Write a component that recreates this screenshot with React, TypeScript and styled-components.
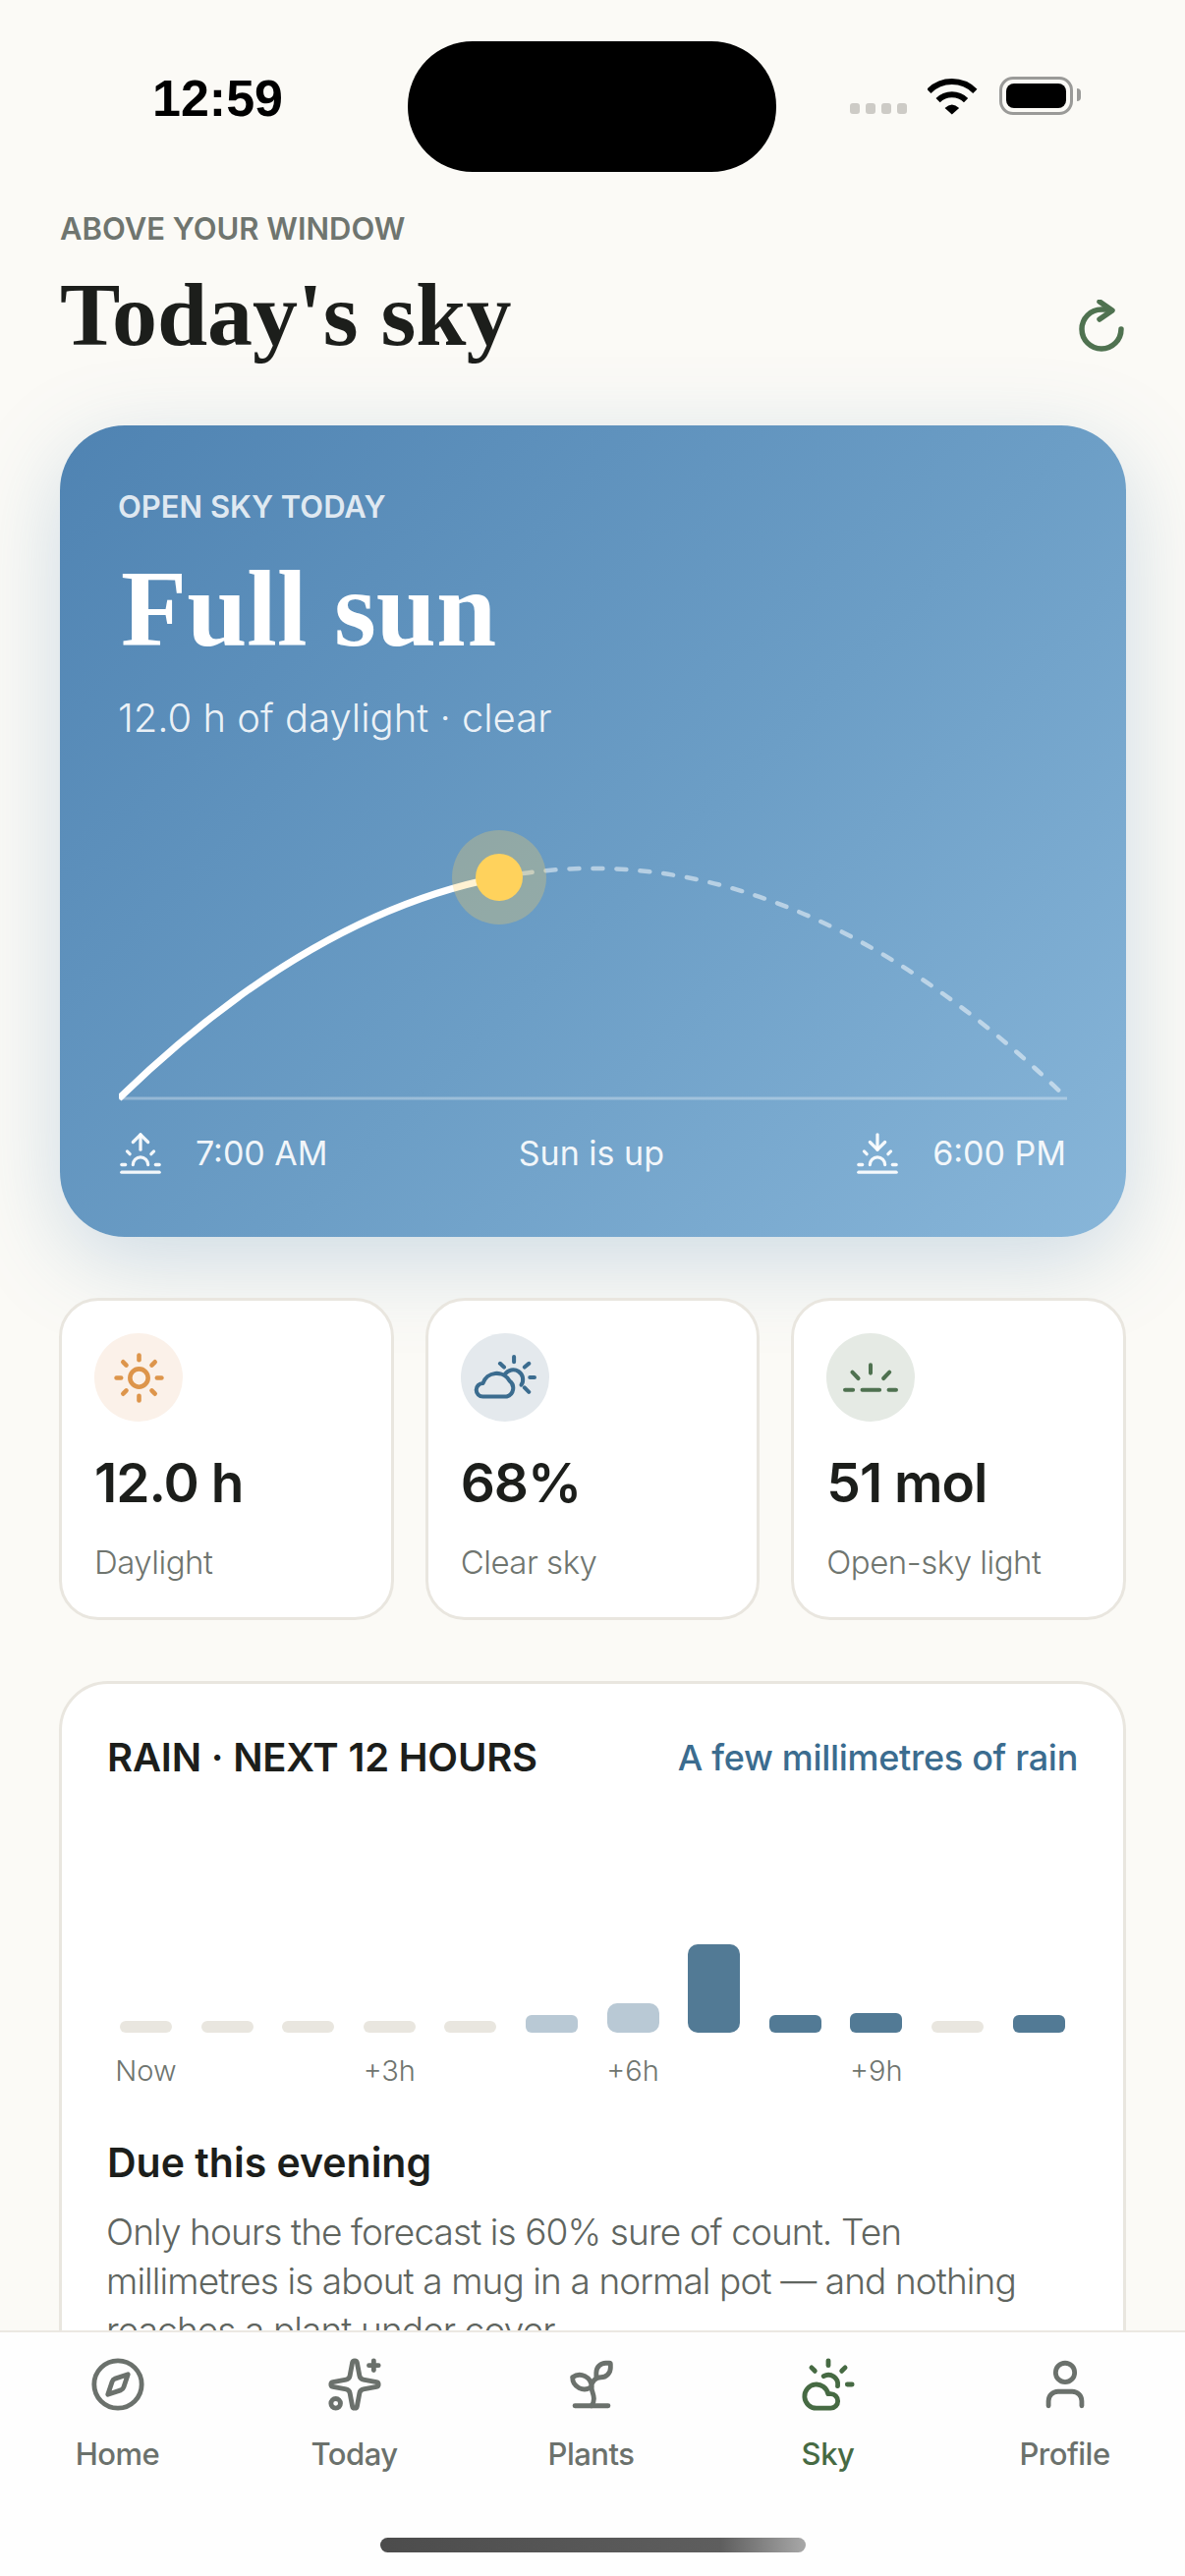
import React from 'react'
import styled, { createGlobalStyle } from 'styled-components'
import { Compass, Sparkles, Sprout, CloudSun, User, Sun, Sunrise, Sunset } from 'lucide-react'

const GlobalStyle = createGlobalStyle`
  html, body { margin: 0; padding: 0; background: #fbfaf6; }
  * { box-sizing: border-box; }
`

const sans = `Inter, "Noto Sans", sans-serif`
const serif = `"Liberation Serif", serif`

const Screen = styled.div`
  width: 1206px;
  height: 2622px;
  display: flex;
  flex-direction: column;
  overflow: hidden;
  background: #fbfaf6;
  font-family: ${sans};
  color: #1c1e1b;
`

const Content = styled.main`
  flex: 1;
  min-height: 0;
  overflow: hidden;
`

const StatusBar = styled.div`
  height: 175px;
  padding: 42px 114px 0 155px;
  display: grid;
  grid-template-columns: 260px 375px 1fr;
`

const Clock = styled.div`
  margin-top: 28px;
  font: 700 52px/60px "Liberation Sans", sans-serif;
  color: #000;
`

const Island = styled.div`
  height: 133px;
  border-radius: 66px;
  background: #000;
`

const StatusIcons = styled.div`
  display: flex;
  justify-content: flex-end;
  align-items: flex-end;
  height: 75px;
  gap: 21px;
`

const SignalDots = styled.div`
  display: flex;
  gap: 6px;
  margin-bottom: 1px;
`

const SignalDot = styled.span`
  width: 10px;
  height: 11px;
  border-radius: 3px;
  background: #cdcbc6;
`

const Battery = styled.div`
  position: relative;
  width: 75px;
  height: 39px;
  margin-left: 1px;
  padding: 4px;
  border: 3px solid #9a9a98;
  border-radius: 14px;
  &::after {
    content: '';
    position: absolute;
    right: -11px;
    top: 9px;
    width: 4px;
    height: 13px;
    border-radius: 0 4px 4px 0;
    background: #9a9a98;
  }
`

const BatteryFill = styled.div`
  width: 100%;
  height: 100%;
  border-radius: 8px;
  background: #000;
`

const Header = styled.header`
  padding: 38px 61px 0;
  height: 258px;
  display: flex;
  justify-content: space-between;
`

const Eyebrow = styled.div`
  font-size: 31px;
  line-height: 40px;
  font-weight: 600;
  color: #6f756f;
`

const PageTitle = styled.h1`
  margin: 15px 0 0;
  font: 700 92px/104px ${serif};
  color: #1c1e1b;
`

const RefreshButton = styled.div`
  margin: 92px 0 0;
  width: 48px;
  height: 56px;
  color: #4f7250;
`

const Hero = styled.section`
  margin: 0 60px 0 61px;
  height: 826px;
  padding: 63px 61px 0 59px;
  border-radius: 66px;
  color: #fff;
  background: linear-gradient(135deg, #4f83b2 0%, #6c9ec6 55%, #88b6d9 100%);
  box-shadow: 0 24px 90px rgba(79, 131, 178, 0.26);
`

const HeroLabel = styled.div`
  font-size: 31px;
  line-height: 40px;
  font-weight: 600;
  color: rgba(255, 255, 255, 0.82);
`

const HeroTitle = styled.h2`
  margin: 24px 0 0 3px;
  font: 700 110px/120px ${serif};
  color: #fff;
`

const HeroSub = styled.div`
  margin-top: 26px;
  font-size: 40px;
  line-height: 50px;
  font-weight: 300;
  color: rgba(255, 255, 255, 0.9);
`

const ArcChart = styled.svg`
  display: block;
  width: 965px;
  height: 292px;
  margin: 74px 0 0 1px;
`

const SunTimes = styled.div`
  margin-top: 27px;
  display: flex;
  justify-content: space-between;
  align-items: center;
  font-size: 34px;
  line-height: 50px;
  font-weight: 400;
  color: rgba(255, 255, 255, 0.92);
`

const SunTime = styled.div`
  display: flex;
  align-items: center;
  gap: 33px;
`

const Metrics = styled.div`
  margin: 62px 60px 0;
  display: grid;
  grid-template-columns: repeat(3, 1fr);
  gap: 32px;
`

const MetricCard = styled.div`
  height: 328px;
  padding: 33px;
  border: 3px solid #e9e6df;
  border-radius: 40px;
  background: #fff;
`

const MetricIcon = styled.div<{ $bg: string; $fg: string }>`
  width: 90px;
  height: 90px;
  border-radius: 50%;
  display: flex;
  align-items: center;
  justify-content: center;
  background: ${({ $bg }) => $bg};
  color: ${({ $fg }) => $fg};
`

const MetricValue = styled.div`
  margin-top: 29px;
  font-size: 55px;
  line-height: 66px;
  font-weight: 600;
  letter-spacing: -1px;
`

const MetricLabel = styled.div`
  margin-top: 26px;
  font-size: 33px;
  line-height: 44px;
  font-weight: 300;
  letter-spacing: -0.5px;
  color: #6f756f;
`

const RainCard = styled.section`
  margin: 62px 60px 0;
  height: 900px;
  padding: 49px 46px 0;
  border: 3px solid #e9e6df;
  border-radius: 50px;
  background: #fff;
`

const RainHead = styled.div`
  display: flex;
  justify-content: space-between;
  align-items: center;
`

const RainTitle = styled.div`
  font-size: 40px;
  line-height: 52px;
  font-weight: 600;
  letter-spacing: -0.2px;
`

const RainSummary = styled.div`
  font-size: 36px;
  line-height: 52px;
  font-weight: 500;
  letter-spacing: -0.3px;
  color: #3b6c8f;
`

const Bars = styled.div`
  margin: 0 0 0 13px;
  height: 254px;
  display: grid;
  grid-template-columns: repeat(12, 53px);
  column-gap: 29.6px;
  align-items: end;
`

const Bar = styled.div<{ $tone: 'none' | 'light' | 'heavy'; $h: number }>`
  height: ${({ $h }) => $h}px;
  border-radius: ${({ $h }) => ($h > 20 ? 10 : 6)}px;
  background: ${({ $tone }) =>
    $tone === 'none' ? '#e9e6df' : $tone === 'light' ? '#b9c9d5' : '#527a95'};
`

const BarLabels = styled.div`
  margin: 20px 0 0 13px;
  display: grid;
  grid-template-columns: repeat(12, 53px);
  column-gap: 29.6px;
`

const BarLabel = styled.div`
  font-size: 29px;
  line-height: 38px;
  font-weight: 300;
  white-space: nowrap;
  display: flex;
  justify-content: center;
  color: #6f756f;
`

const DueTitle = styled.h3`
  margin: 48px 0 0;
  font-size: 41px;
  line-height: 52px;
  font-weight: 600;
`

const DueBody = styled.p`
  margin: 20px 0 0 -1px;
  font-size: 37px;
  line-height: 50px;
  font-weight: 300;
  letter-spacing: -0.9px;
  color: #5f655f;
`

const TabBar = styled.nav`
  height: 250px;
  flex: none;
  border-top: 2px solid #ebe8e2;
  background: #fefefe;
  padding-top: 24px;
  display: flex;
  flex-direction: column;
`

const Tabs = styled.div`
  display: grid;
  grid-template-columns: repeat(5, 241px);
  margin-left: -1px;
`

const Tab = styled.div<{ $active?: boolean }>`
  display: flex;
  flex-direction: column;
  align-items: center;
  gap: 22px;
  font-size: 31px;
  line-height: 40px;
  font-weight: 500;
  letter-spacing: -0.5px;
  color: ${({ $active }) => ($active ? '#466a43' : '#6b716c')};
`

const HomeIndicator = styled.div`
  width: 433px;
  height: 15px;
  margin: 65px auto 0;
  border-radius: 8px;
  background: linear-gradient(90deg, #4c4c4c 0%, #5e5e5e 80%, #a8a8a8 100%);
`

const Refresh = () => (
  <svg width="48" height="56" viewBox="0 0 48 56" fill="none" stroke="currentColor" strokeWidth="5.5" strokeLinecap="round" strokeLinejoin="round">
    <path d="M44 30a20 20 0 1 1-20-20h8" />
    <path d="M22 2l13 9-13 9" />
  </svg>
)

const Wifi = () => (
  <svg width="51" height="38" viewBox="285 55 154 113">
    <path d="M289 96A100 100 0 0 1 431 96" fill="none" stroke="#000" strokeWidth="18" />
    <path d="M317 124A61 61 0 0 1 403 124" fill="none" stroke="#000" strokeWidth="18" />
    <path d="M360 167L338 148Q360 126 382 148Z" fill="#000" />
  </svg>
)

const CloudSunDetail = () => (
  <svg width="66" height="50" viewBox="1205 112 196 140" fill="none" stroke="currentColor" strokeWidth="12" strokeLinecap="round" strokeLinejoin="round">
    <path d="M1236 240H1308A27 27 0 0 0 1316 192A44 44 0 0 0 1236 200A20 20 0 0 0 1236 240Z" />
    <path d="M1303 172A28 28 0 0 1 1352 205" />
    <path d="M1330 120V135M1288 140L1300 151M1375 140L1362 151M1378 182H1392M1362 213L1375 226" />
  </svg>
)

const HorizonRays = () => (
  <svg width="56" height="32" viewBox="140 136 166 90" fill="none" stroke="currentColor" strokeWidth="12" strokeLinecap="round">
    <path d="M223 143V168M168 165L186 184M280 165L262 184M146 219H170M198 219H250M278 219H300" />
  </svg>
)

const bars: { h: number; tone: 'none' | 'light' | 'heavy' }[] = [
  { h: 12, tone: 'none' },
  { h: 12, tone: 'none' },
  { h: 12, tone: 'none' },
  { h: 12, tone: 'none' },
  { h: 12, tone: 'none' },
  { h: 18, tone: 'light' },
  { h: 30, tone: 'light' },
  { h: 90, tone: 'heavy' },
  { h: 18, tone: 'heavy' },
  { h: 20, tone: 'heavy' },
  { h: 12, tone: 'none' },
  { h: 18, tone: 'heavy' },
]

const barLabels = ['Now', '', '', '+3h', '', '', '+6h', '', '', '+9h', '', '']

const tabs = [
  { label: 'Home', Icon: Compass },
  { label: 'Today', Icon: Sparkles },
  { label: 'Plants', Icon: Sprout },
  { label: 'Sky', Icon: CloudSun, active: true },
  { label: 'Profile', Icon: User },
]

export default function App() {
  return (
    <Screen>
      <GlobalStyle />
      <Content>
        <StatusBar>
          <Clock>12:59</Clock>
          <Island />
          <StatusIcons>
            <SignalDots>
              <SignalDot />
              <SignalDot />
              <SignalDot />
              <SignalDot />
            </SignalDots>
            <Wifi />
            <Battery>
              <BatteryFill />
            </Battery>
          </StatusIcons>
        </StatusBar>

        <Header>
          <div>
            <Eyebrow>ABOVE YOUR WINDOW</Eyebrow>
            <PageTitle>Today's sky</PageTitle>
          </div>
          <RefreshButton>
            <Refresh />
          </RefreshButton>
        </Header>

        <Hero>
          <HeroLabel>OPEN SKY TODAY</HeroLabel>
          <HeroTitle>Full sun</HeroTitle>
          <HeroSub>12.0 h of daylight · clear</HeroSub>
          <ArcChart viewBox="121 830 965 292" fill="none">
            <line x1="121" y1="1118" x2="1086" y2="1118" stroke="#fff" strokeOpacity="0.32" strokeWidth="3" />
            <path d="M508 893Q797 837.7 1086 1118" stroke="#fff" strokeOpacity="0.5" strokeWidth="4.5" strokeDasharray="10 14" strokeLinecap="round" />
            <path d="M121 1118Q314.5 930.3 508 893" stroke="#fff" strokeWidth="7" />
            <circle cx="508" cy="893" r="48" fill="#ffd25c" fillOpacity="0.28" />
            <circle cx="508" cy="893" r="24" fill="#ffd25c" />
          </ArcChart>
          <SunTimes>
            <SunTime>
              <Sunrise size={46} strokeWidth={1.7} />
              7:00 AM
            </SunTime>
            <span>Sun is up</span>
            <SunTime>
              <Sunset size={46} strokeWidth={1.7} />
              6:00 PM
            </SunTime>
          </SunTimes>
        </Hero>

        <Metrics>
          <MetricCard>
            <MetricIcon $bg="#fbf1e9" $fg="#dd954b">
              <Sun size={55} strokeWidth={2} />
            </MetricIcon>
            <MetricValue>12.0 h</MetricValue>
            <MetricLabel>Daylight</MetricLabel>
          </MetricCard>
          <MetricCard>
            <MetricIcon $bg="#e4e9ed" $fg="#3b6c8f">
              <CloudSunDetail />
            </MetricIcon>
            <MetricValue>68%</MetricValue>
            <MetricLabel>Clear sky</MetricLabel>
          </MetricCard>
          <MetricCard>
            <MetricIcon $bg="#e5eae4" $fg="#4f7250">
              <HorizonRays />
            </MetricIcon>
            <MetricValue>51 mol</MetricValue>
            <MetricLabel>Open-sky light</MetricLabel>
          </MetricCard>
        </Metrics>

        <RainCard>
          <RainHead>
            <RainTitle>RAIN · NEXT 12 HOURS</RainTitle>
            <RainSummary>A few millimetres of rain</RainSummary>
          </RainHead>
          <Bars>
            {bars.map((b, i) => (
              <Bar key={i} $h={b.h} $tone={b.tone} />
            ))}
          </Bars>
          <BarLabels>
            {barLabels.map((l, i) => (
              <BarLabel key={i}>{l}</BarLabel>
            ))}
          </BarLabels>
          <DueTitle>Due this evening</DueTitle>
          <DueBody>
            Only hours the forecast is 60% sure of count. Ten millimetres is about a mug in a normal pot — and nothing
            reaches a plant under cover.
          </DueBody>
        </RainCard>
      </Content>

      <TabBar>
        <Tabs>
          {tabs.map(({ label, Icon, active }) => (
            <Tab key={label} $active={active}>
              <Icon size={58} strokeWidth={2} />
              {label}
            </Tab>
          ))}
        </Tabs>
        <HomeIndicator />
      </TabBar>
    </Screen>
  )
}
